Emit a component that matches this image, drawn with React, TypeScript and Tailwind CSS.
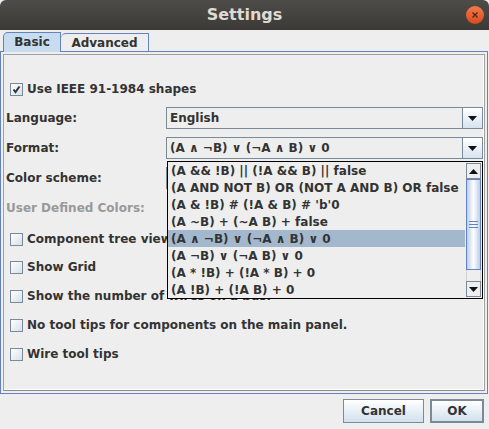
import React from 'react';

const font = { fontFamily: '"DejaVu Sans", "Liberation Sans", sans-serif' };

function Check({ on }: { on?: boolean }) {
  return (
    <div className="w-[13px] h-[13px] border border-[#7a8a99] bg-gradient-to-br from-[#ffffff] to-[#d6e0ea] flex items-center justify-center shrink-0">
      {on && (
        <svg width="9" height="9" viewBox="0 0 9 9">
          <path d="M1.5 4.5 L3.5 7 L7.5 1.5" stroke="#333" strokeWidth="2" fill="none" />
        </svg>
      )}
    </div>
  );
}

function Arrow({ up }: { up?: boolean }) {
  return (
    <svg width="9" height="5" viewBox="0 0 9 5">
      <polygon points={up ? '0,5 9,5 4.5,0' : '0,0 9,0 4.5,5'} fill="#111" />
    </svg>
  );
}

function Combo({ text }: { text: string }) {
  return (
    <div className="flex-1 h-[22px] border border-[#7a8a99] bg-[#eeeeee] flex">
      <div className="flex-1 flex items-center pl-[3px] text-[12px] font-bold text-[#333]">{text}</div>
      <div className="w-[20px] border-l border-[#7a8a99] bg-gradient-to-b from-[#ffffff] to-[#d6e3f0] flex items-center justify-center">
        <Arrow />
      </div>
    </div>
  );
}

function CheckRow({ label, on, className }: { label: string; on?: boolean; className?: string }) {
  return (
    <div className={`flex items-center gap-[4px] pl-[6px] h-[16px] text-[12px] font-bold text-[#333] whitespace-nowrap ${className ?? ''}`}>
      <Check on={on} />
      <span>{label}</span>
    </div>
  );
}

const items = [
  '(A && !B) || (!A && B) || false',
  '(A AND NOT B) OR (NOT A AND B) OR false',
  "(A & !B) # (!A & B) # 'b'0",
  '(A ~B) + (~A B) + false',
  '(A \u2227 \u00acB) \u2228 (\u00acA \u2227 B) \u2228 0',
  '(A \u00acB) \u2228 (\u00acA B) \u2228 0',
  '(A * !B) + (!A * B) + 0',
  '(A !B) + (!A B) + 0',
];

export default function App() {
  return (
    <div className="w-[489px] h-[429px] bg-[#eeeeee] relative overflow-hidden" style={font}>
      {/* title bar */}
      <div className="h-[30px] rounded-t-[6px] bg-gradient-to-b from-[#4d4c48] to-[#3b3a36] relative flex items-center justify-center">
        <span className="text-[16px] font-bold text-[#dfdbd2]">Settings</span>
        <div className="absolute right-[5px] top-[6px] w-[18px] h-[18px] rounded-full bg-gradient-to-b from-[#f37a4a] to-[#d9481c] flex items-center justify-center">
          <svg width="8" height="8" viewBox="0 0 8 8">
            <path d="M1.5 1.5 L6.5 6.5 M6.5 1.5 L1.5 6.5" stroke="#4a2a1a" strokeWidth="1.3" />
          </svg>
        </div>
      </div>

      {/* tabs */}
      <div className="flex pl-[3px] pt-[2px] h-[21px] items-end">
        <div className="h-[20px] w-[58px] border border-b-0 border-[#6382bf] rounded-tl-[5px] bg-[#c8dcf0] flex items-center justify-center text-[12px] font-bold text-[#333] relative z-10 -mb-[1px] pb-[1px]">
          Basic
        </div>
        <div className="h-[18px] w-[88px] border border-b-0 border-l-0 border-[#6382bf] rounded-tl-[5px] bg-[#eeeeee] flex items-center justify-center text-[12px] font-bold text-[#333]">
          Advanced
        </div>
      </div>

      {/* panel */}
      <div className="mx-0 w-[488px] h-[343px] border border-[#6382bf] p-[2px]">
        <div className="h-full border border-[#a0a0a0] border-b-[#8a8a8a] shadow-[inset_-1px_-1px_0_#ffffff] relative">
          <div className="flex flex-col pt-[26px]">
            <CheckRow label="Use IEEE 91-1984 shapes" on />
            <div className="flex items-center h-[22px] mt-[10px] pr-[1px]">
              <span className="w-[162px] pl-[2px] text-[12px] font-bold text-[#333]">Language:</span>
              <Combo text="English" />
            </div>
            <div className="flex items-center h-[22px] mt-[8px] pr-[1px]">
              <span className="w-[162px] pl-[2px] text-[12px] font-bold text-[#333]">Format:</span>
              <Combo text={items[4]} />
            </div>
            <div className="flex items-center h-[22px] mt-[8px] pr-[1px]">
              <span className="w-[162px] pl-[2px] text-[12px] font-bold text-[#333]">Color scheme:</span>
              <Combo text="Default" />
            </div>
            <div className="flex items-center h-[22px] mt-[8px]">
              <span className="pl-[2px] text-[12px] font-bold text-[#999]">User Defined Colors:</span>
            </div>
            <CheckRow label="Component tree view" className="mt-[12px]" />
            <CheckRow label="Show Grid" className="mt-[12px]" />
            <CheckRow label="Show the number of wires on a bus." className="mt-[13px]" />
            <CheckRow label="No tool tips for components on the main panel." className="mt-[13px]" />
            <CheckRow label="Wire tool tips" className="mt-[13px]" />
          </div>

          {/* popup list */}
          <div className="absolute left-[163px] top-[106px] w-[316px] h-[138px] border border-black bg-[#eeeeee] flex z-20">
            <div className="flex-1 flex flex-col">
              {items.map((t, i) => (
                <div
                  key={i}
                  className={`h-[17px] flex items-center pl-[3px] text-[12px] font-bold text-[#333] whitespace-nowrap ${i === 4 ? 'bg-[#a3b8cc]' : ''}`}
                >
                  {t}
                </div>
              ))}
            </div>
            <div className="w-[17px] flex flex-col border-l border-[#eeeeee] pr-[1px] py-[1px]">
              <div className="h-[16px] border border-[#7a8a99] bg-[#eeeeee] flex items-center justify-center">
                <Arrow up />
              </div>
              <div className="h-[91px] border border-[#6382bf] bg-gradient-to-r from-[#b8cfe5] via-[#ffffff] to-[#b8cfe5] flex flex-col items-center justify-center gap-[2px]">
                <div className="w-[9px] h-[1px] bg-[#6382bf]" />
                <div className="w-[9px] h-[1px] bg-[#6382bf]" />
                <div className="w-[9px] h-[1px] bg-[#6382bf]" />
              </div>
              <div className="flex-1 border-x border-[#d0d0d0]" />
              <div className="h-[16px] border border-[#7a8a99] bg-[#eeeeee] flex items-center justify-center">
                <Arrow />
              </div>
            </div>
          </div>
        </div>
      </div>

      {/* buttons */}
      <div className="flex justify-end gap-[6px] pr-[5px] pt-[5px]">
        <button className="w-[81px] h-[24px] border border-[#7a8a99] bg-gradient-to-b from-[#ffffff] to-[#d2e0ee] text-[12px] font-bold text-[#333]">
          Cancel
        </button>
        <button className="w-[54px] h-[24px] border-2 border-[#7a8a99] bg-gradient-to-b from-[#ffffff] to-[#d2e0ee] text-[12px] font-bold text-[#333]">
          OK
        </button>
      </div>
    </div>
  );
}
